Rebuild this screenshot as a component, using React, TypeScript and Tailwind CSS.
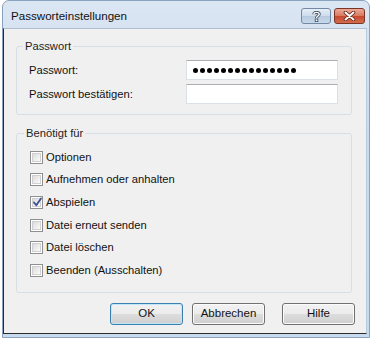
import React from 'react';

const font = { fontFamily: '"Liberation Sans", Arial, sans-serif' };

const options = [
    { label: 'Optionen', checked: false },
    { label: 'Aufnehmen oder anhalten', checked: false },
    { label: 'Abspielen', checked: true },
    { label: 'Datei erneut senden', checked: false },
    { label: 'Datei löschen', checked: false },
    { label: 'Beenden (Ausschalten)', checked: false },
];

const CheckBox: React.FC<{ checked: boolean }> = ({ checked }) => (
    <div className="w-[13px] h-[13px] border border-[#8e8f8f] bg-white p-[1px] shrink-0">
        <div className="relative w-full h-full border border-[#d0d0d0] bg-gradient-to-br from-[#dcdcdc] to-[#fbfbfb]">
            {checked && (
                <svg className="absolute -left-[1px] -top-[2px]" width="11" height="11" viewBox="0 0 11 11">
                    <path d="M2 5.5 L4.3 8.2 L9 1.5" fill="none" stroke="#3b4f91" strokeWidth="1.8" strokeLinecap="round" strokeLinejoin="round" />
                </svg>
            )}
        </div>
    </div>
);

const Button: React.FC<{ label: string; isDefault?: boolean; className?: string }> = ({ label, isDefault, className }) => (
    <button
        className={`w-[73px] h-[22px] rounded-[3px] border text-[11.5px] text-[#111] ${isDefault ? 'border-[#3c7fb1] shadow-[inset_0_0_0_1px_#bfe7f8]' : 'border-[#707070] shadow-[inset_0_0_0_1px_#fbfbfb]'} bg-[linear-gradient(to_bottom,#f2f2f2_0%,#ebebeb_50%,#dddddd_51%,#cfcfcf_100%)] ${className ?? ''}`}
    >
        {label}
    </button>
);

export default function App() {
    return (
        <div className="w-[376px] h-[339px] bg-white" style={font}>
            <div className="ml-[2px] w-[368px] h-[338px] flex flex-col rounded-t-[7px] border border-[#8aa2bd] bg-[linear-gradient(to_bottom,#dbe6f3_0%,#cddcee_30%,#c8daee_100%)]">
                {/* Title bar */}
                <div className="h-[27px] flex items-center pl-[8px] pr-[4px] pt-[3px]">
                    <span className="text-[11.6px] text-[#111]">Passworteinstellungen</span>
                    <div className="ml-auto flex gap-[3px]">
                        <div className="w-[30px] h-[16px] rounded-[3px] border border-[#7288a3] bg-[linear-gradient(to_bottom,#e6eef8_0%,#cddbeb_50%,#b6cadf_51%,#c8d8ea_100%)] flex items-center justify-center">
                            <svg width="9" height="11" viewBox="0 0 9 11">
                                <path d="M1.8 3.2 C1.8 0.8 7.2 0.8 7.2 3.2 C7.2 5 4.5 5 4.5 7" fill="none" stroke="#3b4c63" strokeWidth="3" />
                                <path d="M1.8 3.2 C1.8 0.8 7.2 0.8 7.2 3.2 C7.2 5 4.5 5 4.5 7" fill="none" stroke="#fff" strokeWidth="1.4" />
                                <rect x="3.2" y="8" width="2.6" height="2.6" fill="#fff" stroke="#3b4c63" strokeWidth="0.8" />
                            </svg>
                        </div>
                        <div className="w-[31px] h-[16px] rounded-[3px] border border-[#7a3426] bg-[linear-gradient(to_bottom,#ecaa98_0%,#d9785f_50%,#c4482f_51%,#d66c4d_100%)] flex items-center justify-center">
                            <svg width="13" height="10" viewBox="0 0 13 10">
                                <path d="M2.5 1.5 L10.5 8.5 M10.5 1.5 L2.5 8.5" stroke="#5a2016" strokeWidth="3.6" strokeLinecap="round" />
                                <path d="M2.5 1.5 L10.5 8.5 M10.5 1.5 L2.5 8.5" stroke="#fff" strokeWidth="2" strokeLinecap="round" />
                            </svg>
                        </div>
                    </div>
                </div>

                {/* Client area */}
                <div className="flex-1 mr-[2px] mb-[3px] bg-[#f0f0f0] border-l border-b border-[#2a2a2a] border-t border-r border-t-[#aebfd2] border-r-[#b8cadd] flex flex-col text-[11.2px] text-[#111]">
                    <fieldset className="ml-[12px] mt-[10px] w-[336px] border border-[#d5dfe5] rounded-[3px] pl-[12px] pr-[13px] pb-[10px] pt-[6px] flex flex-col gap-[4px]">
                        <legend className="-ml-[6px] px-[2px] leading-[15px] text-[#1e1e1e]">Passwort</legend>
                        <div className="flex items-center justify-between">
                            <span>Passwort:</span>
                            <div className="w-[152px] h-[20px] bg-white border border-[#dbdfe6] border-t-[#abadb3] flex items-center gap-[2px] pl-[6px]">
                                {Array.from({ length: 15 }).map((_, i) => (
                                    <div key={i} className="w-[5px] h-[5px] rounded-full bg-black" />
                                ))}
                            </div>
                        </div>
                        <div className="flex items-center justify-between">
                            <span>Passwort bestätigen:</span>
                            <div className="w-[152px] h-[20px] bg-white border border-[#dbdfe6] border-t-[#abadb3]" />
                        </div>
                    </fieldset>

                    <fieldset className="ml-[12px] mt-[11px] w-[336px] border border-[#d5dfe5] rounded-[3px] pl-[13px] pb-[10px] pt-[5px] flex flex-col">
                        <legend className="-ml-[6px] px-[2px] leading-[15px] text-[#1e1e1e]">Benötigt für</legend>
                        {options.map((o) => (
                            <div key={o.label} className="h-[22.6px] flex items-center gap-[3px]">
                                <CheckBox checked={o.checked} />
                                <span>{o.label}</span>
                            </div>
                        ))}
                    </fieldset>

                    <div className="mt-[10px] flex justify-end pr-[11px]">
                        <Button label="OK" isDefault />
                        <Button label="Abbrechen" className="ml-[9px]" />
                        <Button label="Hilfe" className="ml-[17px]" />
                    </div>
                </div>
            </div>
        </div>
    );
}
